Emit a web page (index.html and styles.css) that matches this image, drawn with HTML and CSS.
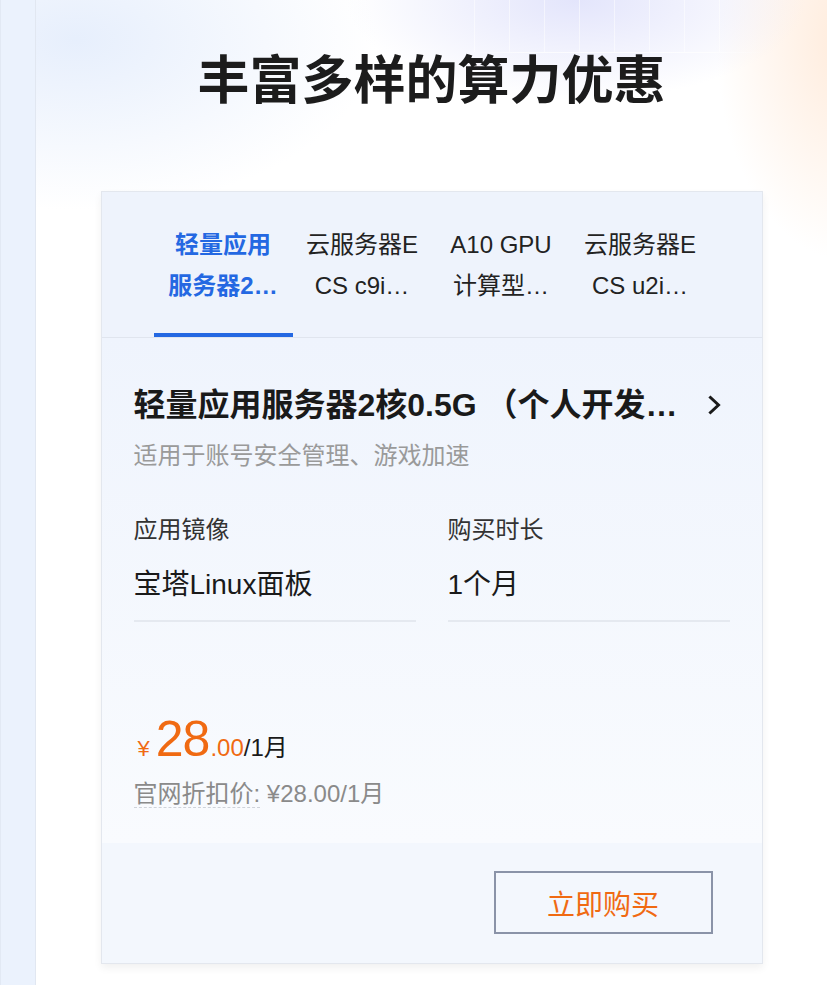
FILE: index.html
```html
<!DOCTYPE html>
<html lang="zh-CN">
<head>
<meta charset="utf-8">
<title>丰富多样的算力优惠</title>
<link rel="stylesheet" href="styles.css">
</head>
<body>
<div class="page">
  <aside class="side"></aside>
  <main class="main">
    <h1 class="headline">丰富多样的算力优惠</h1>
    <section class="card">
      <nav class="tabs">
        <div class="tab active"><span class="tab-text">轻量应用服务器2核0.5G</span></div>
        <div class="tab"><span class="tab-text">云服务器ECS c9i计算型</span></div>
        <div class="tab"><span class="tab-text">A10 GPU计算型实例</span></div>
        <div class="tab"><span class="tab-text">云服务器ECS u2i通用型</span></div>
      </nav>
      <div class="body">
        <div class="title-row">
          <div class="prod-title">轻量应用服务器2核0.5G （个人开发者推荐版）</div>
          <svg class="chev" width="24" height="24" viewBox="0 0 24 24"><path d="M9.5 4.5 L17.5 12 L9.5 19.5" fill="none" stroke="#1a1a1a" stroke-width="3" stroke-linecap="square" stroke-linejoin="miter"/></svg>
        </div>
        <p class="sub">适用于账号安全管理、游戏加速</p>
        <div class="specs">
          <div class="spec">
            <div class="spec-label">应用镜像</div>
            <div class="spec-value">宝塔Linux面板</div>
          </div>
          <div class="spec">
            <div class="spec-label">购买时长</div>
            <div class="spec-value">1个月</div>
          </div>
        </div>
        <div class="price"><span class="yen">¥</span><span class="int">28</span><span class="dec">.00</span><span class="unit">/1月</span></div>
        <div class="orig"><span class="orig-label">官网折扣价:</span> ¥28.00/1月</div>
      </div>
      <div class="foot">
        <button class="buy">立即购买</button>
      </div>
    </section>
  </main>
</div>
</body>
</html>
```
FILE: styles.css
```css
* { box-sizing: border-box; }
html, body { margin: 0; padding: 0; }
body {
  font-family: "Liberation Sans", "Noto Sans CJK SC", sans-serif;
  color: #1a1a1a;
  background: #fff;
}
.page {
  display: flex;
  min-height: 985px;
}
.side {
  width: 36px;
  flex: none;
  background: #ebf2fd;
  border-left: 1px solid #e2e9f4;
  border-right: 1px solid #e1e7f1;
}
.main {
  flex: 1;
  min-width: 0;
  padding-top: 55px;
  background:
    repeating-linear-gradient(90deg, rgba(255,255,255,.5) 0 1px, transparent 1px 35px) 438px 0 / 246px 52px no-repeat,
    linear-gradient(90deg, rgba(255,255,255,0), rgba(255,255,255,.75) 20%, rgba(255,255,255,.75) 80%, rgba(255,255,255,0)) 430px 52px / 300px 1px no-repeat,
    radial-gradient(ellipse 230px 100px at 540px 0px, rgba(224,226,251,.9), rgba(224,226,251,0)),
    radial-gradient(ellipse 130px 220px at 810px 40px, rgba(255,230,210,.8), rgba(255,230,210,0)),
    radial-gradient(ellipse 300px 170px at 40px 40px, rgba(228,237,252,.9), rgba(228,237,252,0)),
    #fff;
}
.headline {
  margin: 0;
  text-align: center;
  font-size: 52px;
  line-height: 52px;
  font-weight: 700;
  color: #1c1c1c;
}
.card {
  width: 662px;
  margin: 84px auto 0;
  border: 1px solid #e3e7ee;
  box-shadow: 0 4px 8px rgba(0, 0, 0, .06);
  background: #fff;
}
.tabs {
  display: flex;
  justify-content: center;
  background: #eef3fc;
  border-bottom: 1px solid #e0e5ee;
}
.tab {
  width: 139px;
  padding: 32px 11.5px 27px;
  border-bottom: 4px solid transparent;
  text-align: center;
  font-size: 24px;
  line-height: 41px;
  color: #222;
}
.tab-text {
  display: -webkit-box;
  -webkit-box-orient: vertical;
  -webkit-line-clamp: 2;
  overflow: hidden;
  word-break: break-all;
  height: 82px;
}
.tab.active {
  color: #2468e2;
  font-weight: 700;
  border-bottom-color: #2468e2;
}
.body {
  padding: 46px 32px 33px;
  background: linear-gradient(180deg, #eff4fd 0%, #f9fbfe 100%);
}
.title-row {
  display: flex;
  align-items: center;
}
.prod-title {
  flex: 1;
  min-width: 0;
  font-size: 32px;
  line-height: 42px;
  font-weight: 700;
  white-space: nowrap;
  overflow: hidden;
  text-overflow: ellipsis;
  color: #1a1a1a;
}
.chev {
  flex: none;
  margin-left: 8px;
  margin-right: 5px;
}
.sub {
  margin: 14px 0 0;
  font-size: 24px;
  line-height: 32px;
  color: #9a9a9a;
}
.specs {
  display: grid;
  grid-template-columns: 1fr 1fr;
  column-gap: 32px;
  margin-top: 42px;
}
.spec {
  padding-bottom: 17px;
  border-bottom: 2px solid #e5e9f0;
}
.spec-label {
  font-size: 24px;
  line-height: 32px;
  color: #333;
}
.spec-value {
  margin-top: 21px;
  font-size: 28px;
  line-height: 36px;
  color: #1a1a1a;
}
.price {
  margin-top: 90px;
  font-size: 50px;
  line-height: 54px;
  color: #f06a12;
}
.price span { line-height: 1; }
.yen {
  font-size: 22px;
  margin-left: 4px;
  margin-right: 6px;
}
.int { font-size: 50px; letter-spacing: -1px; }
.dec { font-size: 24px; margin-left: 1px; }
.unit {
  font-size: 24px;
  color: #1a1a1a;
}
.orig {
  margin-top: 12px;
  font-size: 24px;
  line-height: 32px;
  color: #8a8a8a;
}
.orig-label {
  border-bottom: 1px dashed #cfd3da;
}
.foot {
  display: flex;
  justify-content: flex-end;
  padding: 28px 49px 29px;
  background: #f3f7fd;
}
.buy {
  width: 219px;
  height: 63px;
  border: 2px solid #8a93a8;
  background: transparent;
  color: #f06a12;
  font-family: "Liberation Sans", "Noto Sans CJK SC", sans-serif;
  font-size: 28px;
  padding: 0;
  cursor: pointer;
}
```
